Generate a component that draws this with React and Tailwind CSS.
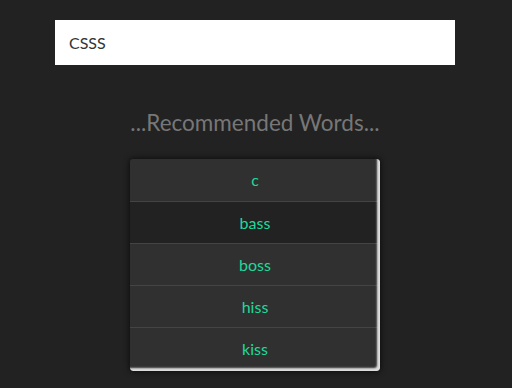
export default function App() {
  const words = ["c", "bass", "boss", "hiss", "kiss"];
  return (
    <div className="min-h-[388px] w-full bg-[#222222]" style={{ fontFamily: "Lato, 'Open Sans', sans-serif" }}>
      <div className="w-[510px] flex flex-col items-center pt-5">
        <div className="w-[400px] h-[45px] bg-white flex items-center pl-[14px] text-[16px] text-[#333]">CSSS</div>
        <div className="mt-[43px] text-[22.5px] leading-[30px] text-[#777777]">...Recommended Words...</div>
        <div className="relative mt-[21px] w-[250px] rounded-[3px] overflow-hidden shadow-[0_0_6px_rgba(0,0,0,0.8)] bg-[#303030] after:content-[''] after:absolute after:inset-0 after:pointer-events-none after:rounded-[3px] after:shadow-[inset_-3px_-3px_2px_#dddddd]">
          {words.map((w, i) => (
            <div
              key={w}
              className={`h-[42px] flex items-center justify-center text-[16px] text-[#1fd99b] ${i > 0 ? "border-t border-[#444444]" : ""} ${i === 1 ? "bg-[#222222]" : ""} ${i === words.length - 1 ? "pb-[2px] h-[44px]" : ""}`}
            >
              {w}
            </div>
          ))}
        </div>
      </div>
    </div>
  );
}
